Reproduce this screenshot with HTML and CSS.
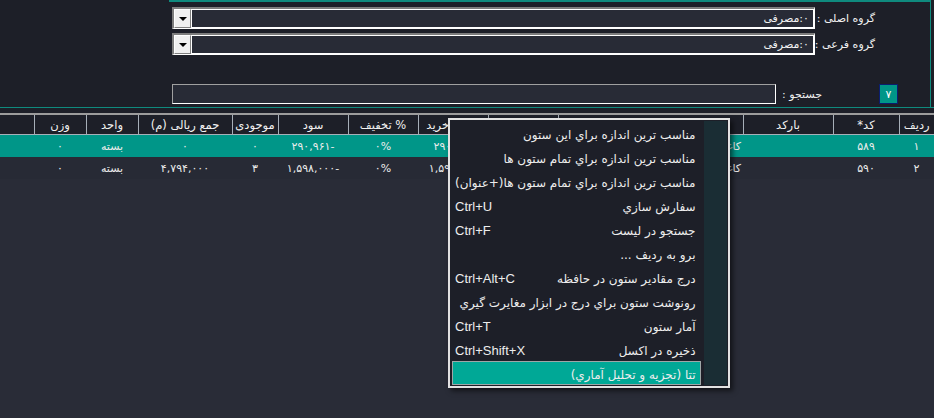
FILE: index.html
```html
<!DOCTYPE html>
<html lang="fa" dir="rtl">
<head>
  <meta charset="UTF-8">
  <meta name="viewport" content="width=device-width, initial-scale=1.0">
  <title>لیست کالا</title>
  <link rel="stylesheet" href="styles.css">
</head>
<body>

  <div class="filter-bar">
    <div class="filter-group">
      <div class="form-row first">
        <label class="form-label">گروه اصلی :</label>
        <div class="combo">
          <div class="combo-field">۰:مصرفی</div>
          <div class="combo-btn"><span class="caret"></span></div>
        </div>
      </div>
      <div class="form-row second">
        <label class="form-label">گروه فرعی :</label>
        <div class="combo">
          <div class="combo-field">۰:مصرفی</div>
          <div class="combo-btn"><span class="caret"></span></div>
        </div>
      </div>
      <div class="form-row search-row">
        <div class="go-btn">۷</div>
        <label class="form-label search-label">جستجو :</label>
        <div class="search-box"></div>
      </div>
    </div>
  </div>

  <div class="grid-gap"></div>

  <div class="grid-wrap">
    <table class="grid">
      <colgroup>
        <col style="width:35px">
        <col style="width:66px">
        <col style="width:90px">
        <col style="width:185px">
        <col style="width:70px">
        <col style="width:70px">
        <col style="width:70px">
        <col style="width:70px">
        <col style="width:46px">
        <col style="width:94px">
        <col style="width:52px">
        <col style="width:52px">
        <col style="width:140px">
      </colgroup>
      <thead>
        <tr>
          <th>ردیف</th>
          <th>کد*</th>
          <th>بارکد</th>
          <th></th>
          <th></th>
          <th>قیمت خرید</th>
          <th>% تخفیف</th>
          <th>سود</th>
          <th>موجودی</th>
          <th>جمع ریالی (م)</th>
          <th>واحد</th>
          <th>وزن</th>
          <th>توضیحات</th>
        </tr>
      </thead>
      <tbody>
        <tr class="selected">
          <td>۱</td>
          <td>۵۸۹</td>
          <td></td>
          <td class="name">کاغذ</td>
          <td></td>
          <td>۲۹۰,۹۶۱</td>
          <td>۰%</td>
          <td>-۲۹۰,۹۶۱</td>
          <td>۰</td>
          <td>۰</td>
          <td>بسته</td>
          <td>۰</td>
          <td></td>
        </tr>
        <tr>
          <td>۲</td>
          <td>۵۹۰</td>
          <td></td>
          <td class="name">کاغذ</td>
          <td></td>
          <td>۱,۵۹۸,۰۰۰</td>
          <td>۰%</td>
          <td>-۱,۵۹۸,۰۰۰</td>
          <td>۳</td>
          <td>۴,۷۹۴,۰۰۰</td>
          <td>بسته</td>
          <td>۰</td>
          <td></td>
        </tr>
      </tbody>
    </table>
  </div>

  <!-- column header context menu -->
  <div class="ctx-menu">
    <div class="ctx-strip"></div>
    <div class="ctx-items">
      <div class="ctx-item"><span>مناسب ترین اندازه براي این ستون</span></div>
      <div class="ctx-item"><span>مناسب ترین اندازه براي تمام ستون ها</span></div>
      <div class="ctx-item"><span>مناسب ترین اندازه براي تمام ستون ها(+عنوان)</span></div>
      <div class="ctx-item"><span>سفارش سازي</span><span class="shortcut">Ctrl+U</span></div>
      <div class="ctx-item"><span>جستجو در لیست</span><span class="shortcut">Ctrl+F</span></div>
      <div class="ctx-item"><span>برو به ردیف ...</span></div>
      <div class="ctx-item"><span>درج مقادیر ستون در حافظه</span><span class="shortcut">Ctrl+Alt+C</span></div>
      <div class="ctx-item"><span>رونوشت ستون براي درج در ابزار مغایرت گیري</span></div>
      <div class="ctx-item"><span>آمار ستون</span><span class="shortcut">Ctrl+T</span></div>
      <div class="ctx-item"><span>ذخیره در اکسل</span><span class="shortcut">Ctrl+Shift+X</span></div>
      <div class="ctx-item active"><span>تتا (تجزیه و تحلیل آماري)</span></div>
    </div>
  </div>

</body>
</html>
```

FILE: styles.css
```css
html, body {
  margin: 0;
  height: 100%;
}

body {
  font-family: "DejaVu Sans", sans-serif;
  font-size: 11px;
  color: #ececec;
  background-color: #292c37;
  overflow: hidden;
}

.filter-bar {
  height: 107px;
  background-color: #1d1f28;
  border-bottom: 1px solid #0f8a7e;
  display: flex;
}

.filter-group {
  flex: 1;
  margin-left: 169px;
  margin-right: 3px;
  border-top: 2px solid #0f8a7e;
  border-right: 1px solid #0f8a7e;
}

.form-row {
  display: flex;
  align-items: center;
  height: 22px;
  padding-right: 55px;
  padding-left: 3px;
}

.form-row.first {
  margin-top: 5px;
}

.form-row.second {
  margin-top: 4px;
}

.form-label {
  width: 60px;
  flex-shrink: 0;
  white-space: nowrap;
  color: #f2f2f2;
}

.combo {
  flex: 1;
  display: flex;
  height: 22px;
  box-sizing: border-box;
  border-style: solid;
  border-width: 2px 1px 1px 2px;
  border-color: #7d7d7d #fff #fff #7d7d7d;
  background-color: #c8c8c8;
}

.combo-field {
  flex: 1;
  background-color: #282b36;
  border: 1px solid #fff;
  padding-right: 4px;
  line-height: 17px;
  color: #f2f2f2;
}

.combo-btn {
  width: 15px;
  background-color: #f0f0f0;
  border: 1px solid;
  border-color: #fff #808080 #808080 #fff;
  display: flex;
  align-items: center;
  justify-content: center;
}

.caret {
  width: 0;
  height: 0;
  border-left: 4px solid transparent;
  border-right: 4px solid transparent;
  border-top: 4px solid #000;
}

.search-row {
  margin-top: 29px;
  height: 20px;
  padding-right: 32px;
}

.go-btn {
  width: 19px;
  height: 20px;
  box-sizing: border-box;
  flex-shrink: 0;
  background-color: #009688;
  border: 1px solid #0b1d6e;
  color: #fff;
  display: flex;
  align-items: center;
  justify-content: center;
}

.search-label {
  width: 46px;
  margin-right: 57px;
}

.search-box {
  flex: 1;
  height: 20px;
  box-sizing: border-box;
  background-color: #282b36;
  border: 1px solid;
  border-color: #a0a0a0 #fff #fff #a0a0a0;
}

.grid-gap {
  height: 5px;
  background-color: #1d1f28;
  border-bottom: 2px solid #9c9c9c;
}

.grid-wrap {
  overflow: hidden;
}

.grid {
  width: 1040px;
  table-layout: fixed;
  border-collapse: collapse;
}

.grid th {
  height: 19px;
  padding: 0;
  font-weight: normal;
  font-size: 11.5px;
  color: #f2f2f2;
  background-color: #1d1f28;
  border-left: 1px solid #a7afb8;
  border-bottom: 1px solid #a7afb8;
  white-space: nowrap;
  overflow: hidden;
}

.grid td {
  height: 22px;
  padding: 0 2px;
  text-align: center;
  white-space: nowrap;
  overflow: hidden;
  background-color: #272a35;
}

.grid td.name {
  text-align: right;
}

.grid tr.selected td {
  background-color: #009688;
}

.ctx-menu {
  position: absolute;
  left: 448px;
  top: 118px;
  width: 282px;
  height: 270px;
  box-sizing: border-box;
  padding: 1px;
  border: 2px solid #e2e2e2;
  background-color: #1d1f28;
  box-shadow: 3px 3px 5px rgba(0, 0, 0, 0.55);
  display: flex;
  font-size: 12px;
}

.ctx-strip {
  width: 27px;
  background-color: #1a2d34;
}

.ctx-items {
  flex: 1;
}

.ctx-item {
  display: flex;
  justify-content: space-between;
  align-items: center;
  height: 24px;
  box-sizing: border-box;
  padding: 3px 8px 0 4px;
  white-space: nowrap;
  color: #ededed;
}

.ctx-item .shortcut {
  direction: ltr;
  font-family: "Liberation Sans", sans-serif;
  font-size: 13px;
}

.ctx-item.active {
  margin: 0 3px 0 1px;
  padding-right: 4px;
  background-color: #00a896;
  border: 1px solid #9ea6a7;
}
```
